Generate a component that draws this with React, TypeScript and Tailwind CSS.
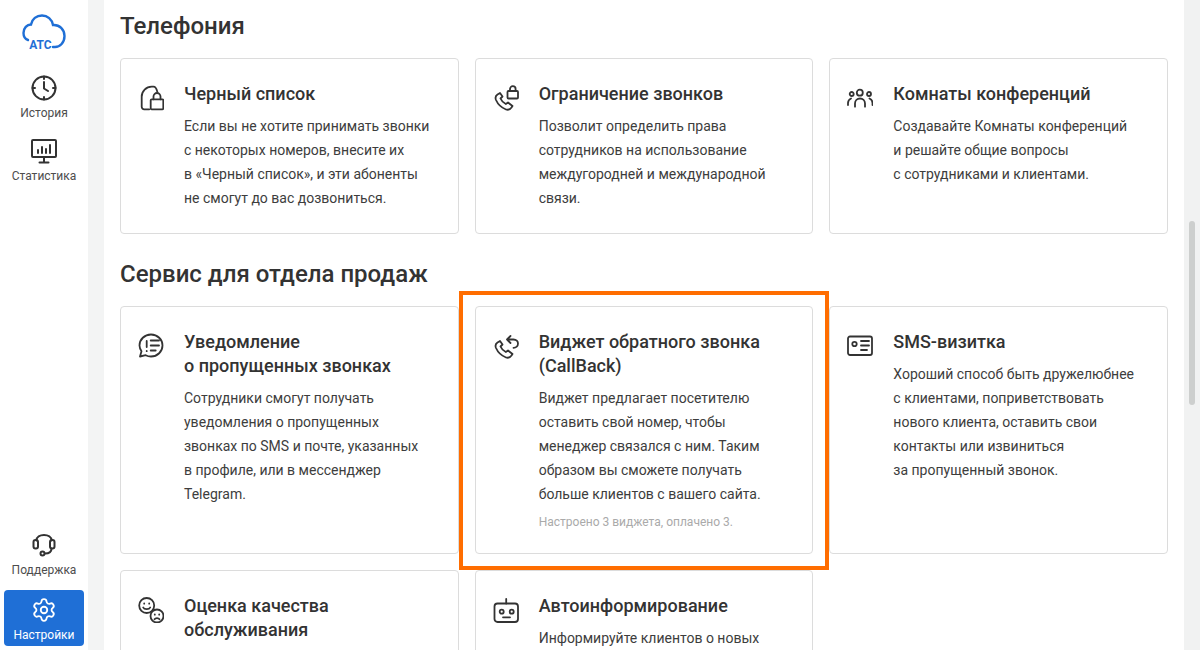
import type { ReactNode } from "react";
import { Settings } from "lucide-react";

const Ico = ({ children, width = "1.8" }: { children: ReactNode; width?: string }) => (
  <svg
    width={26}
    height={26}
    viewBox="0 0 26 26"
    fill="none"
    stroke="currentColor"
    strokeWidth={width}
    strokeLinecap="round"
    strokeLinejoin="round"
  >
    {children}
  </svg>
);

const LogoIcon = () => (
  <svg width="44" height="38" viewBox="0 0 44 38" fill="none">
    <path
      d="M6 26C3 25 1.500 22 1.500 19C1.500 14 5 10.500 9 10.500C10 5 14.500 1.500 20 1.500C25.500 1.500 30 5.500 31 11C37.500 10.500 42.500 15.500 42.500 22C42.500 28.500 38 33 33 33H31"
      stroke="#1f6fd6"
      strokeWidth="2.400"
      strokeLinecap="round"
    />
    <text x="7.200" y="35" fontSize="12" fontWeight="700" fill="#1f6fd6" fontFamily="Roboto, sans-serif">
      АТС
    </text>
  </svg>
);

const ClockIcon = () => (
  <Ico width="2">
    <circle cx="13" cy="13" r="11.500" />
    <path d="M13 1.500v2.500M13 22v2.500M1.500 13H4M22 13h2.500M13 7v6.500l4 2.500" />
  </Ico>
);

const StatsIcon = () => (
  <Ico width="2">
    <rect x="1" y="2" width="24" height="17" rx="1" />
    <path d="M13 19v5M8.500 24.500h9M7 15v-3M11 15V9M15 15v-4M19 15V7" />
  </Ico>
);

const SupportIcon = () => (
  <Ico width="2">
    <path d="M5.500 8V8.500C5.500 5 9 3 13 3s7.500 2 7.500 5.500V8" />
    <rect x="2.500" y="8" width="4.500" height="8.500" rx="2" />
    <rect x="19" y="8" width="4.500" height="8.500" rx="2" />
    <path d="M20.500 16.500c0 3-2.500 5-6.500 5" />
    <circle cx="11.500" cy="21.500" r="2" />
  </Ico>
);

const BlacklistIcon = () => (
  <Ico>
    <path d="M11.300 24.300H6.200A2.500 2.500 0 0 1 3.700 21.800V11.700C3.700 6.200 8.200 1.700 13.700 1.700H15.500C17 1.700 18.500 3.500 19.300 6.700" />
    <rect x="12.700" y="14.300" width="12.600" height="10" rx="1" />
    <path d="M15.500 14.300V11.500a3.500 3.500 0 0 1 7 0v2.800" />
  </Ico>
);

const PhoneLockIcon = () => (
  <Ico>
    <path d="M7 8 4.500 9.500C2.500 10.800 2 12.500 3 15C5 19.500 8 22.500 13 24.500C15.500 25.300 17 24.500 18.500 22.500L19.500 21L15 17.500L12.800 19C10.500 18 8.500 15.800 7.500 13.500L9.500 11.500Z" />
    <rect x="14.500" y="6" width="10.500" height="7.500" rx="1" />
    <path d="M17 6V4a2.800 2.800 0 0 1 5.600 0v2" />
  </Ico>
);

const RoomsIcon = () => (
  <Ico>
    <circle cx="12.800" cy="7.700" r="3" />
    <circle cx="4.700" cy="9" r="2" />
    <circle cx="22" cy="9" r="2" />
    <path d="M8 21.700V18.500a5 5 0 0 1 10 0v3.200M1 20v-2c0-2 1-3.500 3-4.500M25.500 20v-2c0-2-1-3.500-3-4.500" />
  </Ico>
);

const ChatIcon = () => (
  <Ico>
    <path d="M13 1.500c6.500 0 11.500 5 11.500 11s-5 11-11.500 11c-2 0-3.800-.5-5.300-1.300L2 23.500l1.500-5.200A10.600 10.600 0 0 1 1.500 12.500c0-6 5-11 11.500-11z" />
    <path d="M8.700 8v6M8.700 18v.2M12.700 7.500h8.300M12.700 12.500h8.300M12.700 17.500h5" />
  </Ico>
);

const CallbackIcon = () => (
  <Ico>
    <path d="M7 8 4.500 9.500C2.500 10.800 2 12.500 3 15C5 19.500 8 22.500 13 24.500C15.500 25.300 17 24.500 18.500 22.500L19.500 21L15 17.500L12.800 19C10.500 18 8.500 15.800 7.500 13.500L9.500 11.500Z" />
    <path d="M14 6.500H20.500C23.300 6.500 25 8.500 25 10.500C25 13 23 14.800 20.500 14.800M17.500 3 14 6.500 17.500 10" />
  </Ico>
);

const CardIcon = () => (
  <Ico>
    <rect x="1" y="3.500" width="24" height="18.500" rx="2" />
    <circle cx="7.500" cy="11" r="2.200" />
    <path d="M14 8h8M14 12.500h8M14 17h6" />
  </Ico>
);

const FacesIcon = () => (
  <Ico>
    <circle cx="8.700" cy="8.500" r="7.500" />
    <circle cx="19" cy="19" r="6.500" fill="white" />
    <path d="M6.200 6.500v.2M11.200 6.500v.2M5.200 10.500c1 2.200 6 2.200 7 0M16.800 17.500v.2M21.200 17.500v.2M16.500 22.300c1-1.500 4-1.500 5 0" />
  </Ico>
);

const RobotIcon = () => (
  <Ico>
    <rect x="1.500" y="6.500" width="23.500" height="18.500" rx="3" />
    <path d="M13.200 6.500V2M10 20.300h7" />
    <circle cx="8.700" cy="14.700" r="2" />
    <circle cx="18.700" cy="14.700" r="2" />
  </Ico>
);

const NavItem = ({ icon, label, active }: { icon: ReactNode; label: string; active?: boolean }) => (
  <div
    className={
      active
        ? "w-20 h-14 rounded bg-[#1f6fd6] text-white flex flex-col items-center pt-[7px]"
        : "w-20 h-14 text-[#333333] flex flex-col items-center pt-[7px]"
    }
  >
    {icon}
    <span className={active ? "text-xs leading-4 mt-1 text-white" : "text-xs leading-4 mt-1 text-[#4d4d4d]"}>
      {label}
    </span>
  </div>
);

const ServiceCard = ({
  icon,
  title,
  lines,
  note,
}: {
  icon: ReactNode;
  title: string[];
  lines: string[];
  note?: string;
}) => (
  <div className="border border-[#dcdcdc] rounded-[4px] bg-white pl-[17px] pr-4 py-[23px] flex gap-[20px]">
    <div className="w-[26px] shrink-0 text-[#333333] pt-[3px]">{icon}</div>
    <div className="min-w-0">
      <div className="text-lg leading-6 font-medium text-[#333333]">
        {title.map((t) => (
          <div key={t}>{t}</div>
        ))}
      </div>
      <div className="mt-2 text-sm leading-6 text-[#3d3d3d]">
        {lines.map((l) => (
          <div key={l} className="whitespace-nowrap">
            {l}
          </div>
        ))}
      </div>
      {note && <div className="mt-2 text-xs leading-4 text-[#aaaaaa]">{note}</div>}
    </div>
  </div>
);

export default function App() {
  return (
    <div className="w-[1200px] h-[650px] overflow-hidden flex bg-white font-['Roboto',sans-serif]">
      <aside className="w-[88px] h-full shrink-0 bg-white flex flex-col items-center pt-[14px] pb-1">
        <LogoIcon />
        <div className="mt-4 flex flex-col gap-[7px]">
          <NavItem icon={<ClockIcon />} label="История" />
          <NavItem icon={<StatsIcon />} label="Статистика" />
        </div>
        <div className="mt-auto flex flex-col gap-[9px]">
          <NavItem icon={<SupportIcon />} label="Поддержка" />
          <NavItem icon={<Settings size={26} strokeWidth={1.7} />} label="Настройки" active />
        </div>
      </aside>

      <div className="w-4 h-full shrink-0 bg-[#f3f4f4]" />

      <main className="relative w-[1080px] h-full shrink-0 overflow-hidden px-4 pt-[10px]">
        <h2 className="text-2xl leading-8 font-medium text-[#333333] mb-4">Телефония</h2>
        <div className="grid grid-cols-3 gap-4">
          <ServiceCard
            icon={<BlacklistIcon />}
            title={["Черный список"]}
            lines={[
              "Если вы не хотите принимать звонки",
              "с некоторых номеров, внесите их",
              "в «Черный список», и эти абоненты",
              "не смогут до вас дозвониться.",
            ]}
          />
          <ServiceCard
            icon={<PhoneLockIcon />}
            title={["Ограничение звонков"]}
            lines={[
              "Позволит определить права",
              "сотрудников на использование",
              "междугородней и международной",
              "связи.",
            ]}
          />
          <ServiceCard
            icon={<RoomsIcon />}
            title={["Комнаты конференций"]}
            lines={[
              "Создавайте Комнаты конференций",
              "и решайте общие вопросы",
              "с сотрудниками и клиентами.",
            ]}
          />
        </div>

        <h2 className="mt-6 text-2xl leading-8 font-medium text-[#333333] mb-4">Сервис для отдела продаж</h2>
        <div className="grid grid-cols-3 gap-4">
          <ServiceCard
            icon={<ChatIcon />}
            title={["Уведомление", "о пропущенных звонках"]}
            lines={[
              "Сотрудники смогут получать",
              "уведомления о пропущенных",
              "звонках по SMS и почте, указанных",
              "в профиле, или в мессенджер",
              "Telegram.",
            ]}
          />
          <ServiceCard
            icon={<CallbackIcon />}
            title={["Виджет обратного звонка", "(CallBack)"]}
            lines={[
              "Виджет предлагает посетителю",
              "оставить свой номер, чтобы",
              "менеджер связался с ним. Таким",
              "образом вы сможете получать",
              "больше клиентов с вашего сайта.",
            ]}
            note="Настроено 3 виджета, оплачено 3."
          />
          <ServiceCard
            icon={<CardIcon />}
            title={["SMS-визитка"]}
            lines={[
              "Хороший способ быть дружелюбнее",
              "с клиентами, поприветствовать",
              "нового клиента, оставить свои",
              "контакты или извиниться",
              "за пропущенный звонок.",
            ]}
          />
          <ServiceCard icon={<FacesIcon />} title={["Оценка качества", "обслуживания"]} lines={[]} />
          <ServiceCard
            icon={<RobotIcon />}
            title={["Автоинформирование"]}
            lines={["Информируйте клиентов о новых"]}
          />
        </div>

        {/* рамка-выделение поверх карточки */}
        <div className="absolute left-[355px] top-[291px] w-[370px] h-[279px] border-4 border-[#ff6d00] pointer-events-none" />
      </main>

      <div className="w-4 h-full shrink-0 bg-[#f1f2f2] relative">
        <div className="absolute left-[5px] top-[221px] w-[6px] h-[184px] rounded-full bg-[#cdcfce]" />
      </div>
    </div>
  );
}
